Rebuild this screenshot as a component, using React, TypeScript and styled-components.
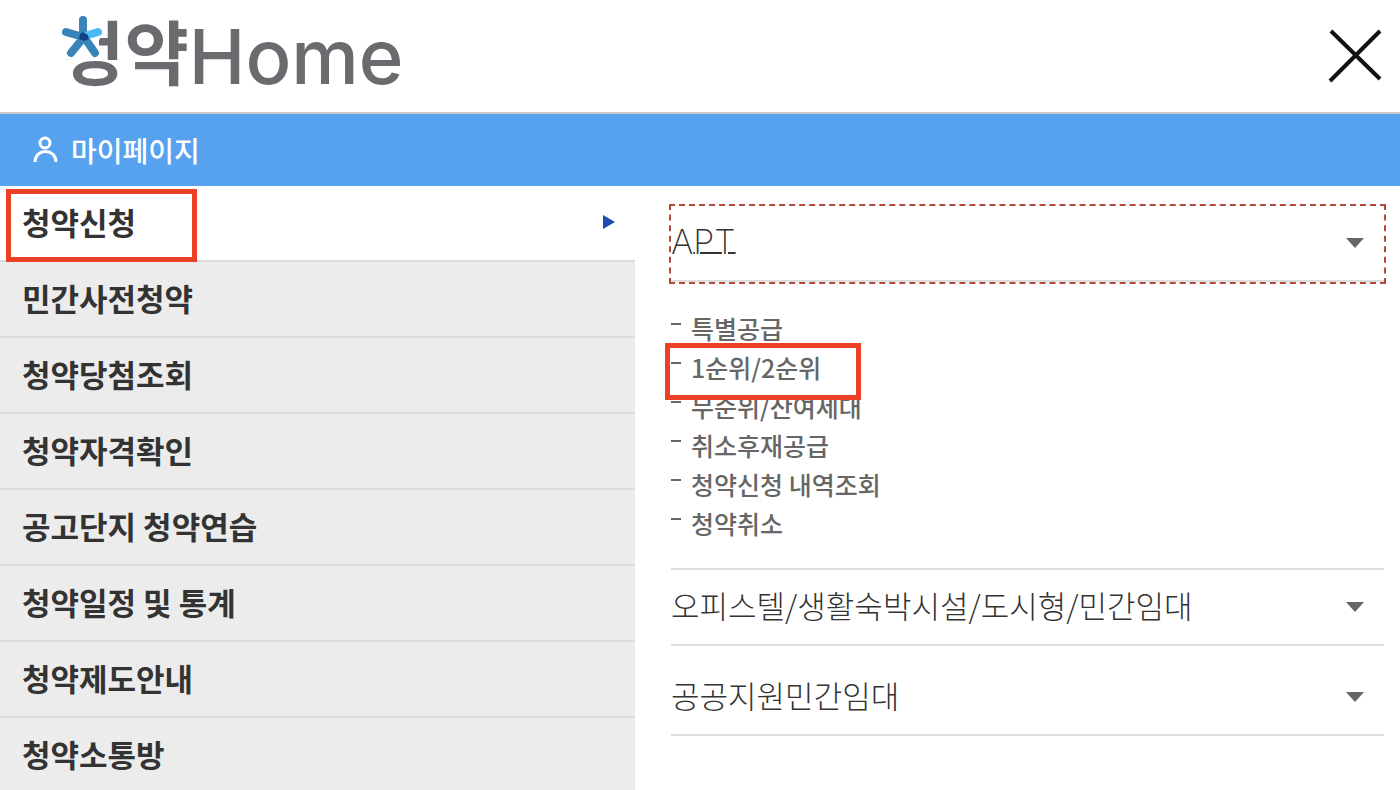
import React, { useState } from 'react';
import styled, { createGlobalStyle, css } from 'styled-components';

const GlobalStyle = createGlobalStyle`
  *, *::before, *::after { box-sizing: border-box; }
  body {
    margin: 0;
    background: #fff;
    color: #333;
    font-family: "Noto Sans CJK KR", sans-serif;
  }
  ul { list-style: none; margin: 0; padding: 0; }
  h2 { margin: 0; font: inherit; }
  a { color: inherit; text-decoration: none; }
  button { border: 0; background: none; padding: 0; color: inherit; font: inherit; cursor: pointer; }
`;

const Page = styled.div`
  display: flex;
  flex-direction: column;
  height: 100vh;
  overflow: hidden;
`;

const Header = styled.header`
  display: flex;
  flex: none;
  align-items: center;
  justify-content: space-between;
  height: 114px;
  padding: 0 17px 0 60px;
  border-bottom: 2px solid #c8c8c8;
`;

const Logo = styled.a`
  position: relative;
  display: flex;
  align-items: center;
  && { color: #6a6b6f; }
`;

const LogoHangul = styled.span`
  padding-bottom: 12px;
  font-size: 70px;
  font-weight: 700;
  line-height: 68px;
`;

const LogoLatin = styled.span`
  font-family: Inter, sans-serif;
  font-size: 76px;
  font-weight: 500;
  line-height: 80px;
`;

const LogoStar = styled.svg`
  position: absolute;
  left: 0;
  top: 0;
`;

const CloseButton = styled.button`
  display: flex;
`;

const MyPageBar = styled.a`
  display: flex;
  flex: none;
  align-items: center;
  gap: 13px;
  height: 72px;
  padding: 0 32px;
  background: #56a2ee;
  && { color: #fff; }
  font-size: 28px;
  font-weight: 500;
`;

const Body = styled.div`
  display: flex;
  flex: 1;
  min-height: 0;
`;

const SideNav = styled.nav`
  width: 45.36%;
  background: #ececec;
  overflow: hidden;
`;

const SideItem = styled.li<{ $active: boolean }>`
  position: relative;
  height: 76px;
  border-bottom: 2px solid #dcdcdc;
  background: ${(p) => (p.$active ? '#fff' : '#ececec')};
`;

const SideLink = styled.a`
  display: flex;
  align-items: center;
  justify-content: space-between;
  height: 100%;
  padding: 0 20px 3px 22px;
  font-size: 31px;
  font-weight: 700;
  line-height: 44px;
`;

const marker = css`
  position: absolute;
  border: 5px solid #eb4026;
  pointer-events: none;
  z-index: 1;
`;

const SideMarker = styled.span`
  ${marker}
  top: 3px;
  left: 6px;
  width: 191px;
  height: 73px;
`;

const SubMarker = styled.span`
  ${marker}
  top: -6px;
  left: -6px;
  width: 196px;
  height: 57px;
`;

const Content = styled.main`
  display: flex;
  flex: 1;
  flex-direction: column;
  padding: 20px 16px 0 36px;
`;

const Section = styled.section`
  & + & + & { margin-top: 14px; }
`;

const SectionButton = styled.button<{ $focused: boolean }>`
  display: flex;
  align-items: center;
  justify-content: space-between;
  width: 100%;
  height: 76px;
  padding-right: 20px;
  border-bottom: 2px solid #dedede;
  font-size: 31px;
  font-weight: 300;
  line-height: 44px;
  text-align: left;
  outline: ${(p) => (p.$focused ? '2px dashed #b5473f' : 'none')};
`;

const SectionTitle = styled.span`
  padding-bottom: 4px;
`;

const LatinTitle = styled.span`
  font-family: Inter, sans-serif;
  font-size: 34px;
  font-weight: 200;
`;

const Underlined = styled.span`
  text-decoration: underline;
  text-decoration-thickness: 2px;
  text-underline-offset: -2px;
`;

const SubList = styled.ul`
  padding: 28px 0 24px;
  border-bottom: 2px solid #dedede;
`;

const SubItem = styled.li`
  position: relative;
  display: flex;
  gap: 10px;
  height: 39px;
  color: #666;
  font-size: 25px;
  font-weight: 500;
  line-height: 37px;

  &::before {
    content: "";
    width: 10px;
    height: 2px;
    margin-top: 13px;
    background: #666;
  }
`;

const menu = [
  '청약신청',
  '민간사전청약',
  '청약당첨조회',
  '청약자격확인',
  '공고단지 청약연습',
  '청약일정 및 통계',
  '청약제도안내',
  '청약소통방',
];

const sections: { id: string; title: React.ReactNode; items: string[] }[] = [
  {
    id: 'apt',
    title: (
      <LatinTitle>
        A<Underlined>PT</Underlined>
      </LatinTitle>
    ),
    items: ['특별공급', '1순위/2순위', '무순위/잔여세대', '취소후재공급', '청약신청 내역조회', '청약취소'],
  },
  { id: 'officetel', title: '오피스텔/생활숙박시설/도시형/민간임대', items: [] },
  { id: 'public', title: '공공지원민간임대', items: [] },
];

const Caret = () => (
  <svg width="18" height="10" viewBox="0 0 18 10" aria-hidden="true">
    <path d="M0 0H18L9 10Z" fill="#666" />
  </svg>
);

const Star = () => (
  <LogoStar width="46" height="46" viewBox="0 0 46 46" aria-hidden="true">
    <path d="M0 0H42V20L39 24V32L43 34V43H0Z" fill="#fff" />
    <g fill="none" stroke="#3884b8" strokeWidth="8" strokeLinecap="round">
      <path d="M23 21V4M23 21L6 16M24 21L11 37M24 21L35 37" />
      <path d="M25 20L38 16" stroke="#4bb9f4" />
    </g>
    <path d="M23 16L28 19L29 23L24 25L19 23L20 18Z" fill="#0d4389" />
  </LogoStar>
);

export default function App() {
  const [active, setActive] = useState(menu[0]);
  const [open, setOpen] = useState('apt');

  return (
    <>
      <GlobalStyle />
      <Page>
        <Header>
          <Logo href="#home">
            <LogoHangul>청약</LogoHangul>
            <LogoLatin>Home</LogoLatin>
            <Star />
          </Logo>
          <CloseButton type="button" aria-label="닫기">
            <svg width="56" height="56" viewBox="0 0 56 56" fill="none" stroke="#111" strokeWidth="4">
              <path d="M4 3L53 51M53 3L3 53" />
            </svg>
          </CloseButton>
        </Header>
        <MyPageBar href="#mypage">
          <svg width="26" height="28" viewBox="0 0 26 28" fill="none" stroke="#fff" strokeWidth="3" aria-hidden="true">
            <circle cx="13" cy="7" r="5" />
            <path d="M3 26C3 12 24 12 24 26" />
          </svg>
          마이페이지
        </MyPageBar>
        <Body>
          <SideNav>
            <ul>
              {menu.map((label, i) => (
                <SideItem key={label} $active={label === active}>
                  <SideLink href="#menu" onClick={() => setActive(label)}>
                    {label}
                    {label === active && (
                      <svg width="12" height="14" viewBox="0 0 12 14" aria-hidden="true">
                        <path d="M0 0L12 7L0 14Z" fill="#1f4eb0" />
                      </svg>
                    )}
                  </SideLink>
                  {i === 0 && <SideMarker />}
                </SideItem>
              ))}
            </ul>
          </SideNav>
          <Content>
            {sections.map((s) => (
              <Section key={s.id}>
                <h2>
                  <SectionButton
                    type="button"
                    $focused={s.id === open}
                    aria-expanded={s.id === open}
                    onClick={() => setOpen(s.id)}
                  >
                    <SectionTitle>{s.title}</SectionTitle>
                    <Caret />
                  </SectionButton>
                </h2>
                {s.id === open && s.items.length > 0 && (
                  <SubList>
                    {s.items.map((item, i) => (
                      <SubItem key={item}>
                        <a href="#apply">{item}</a>
                        {i === 1 && <SubMarker />}
                      </SubItem>
                    ))}
                  </SubList>
                )}
              </Section>
            ))}
          </Content>
        </Body>
      </Page>
    </>
  );
}
